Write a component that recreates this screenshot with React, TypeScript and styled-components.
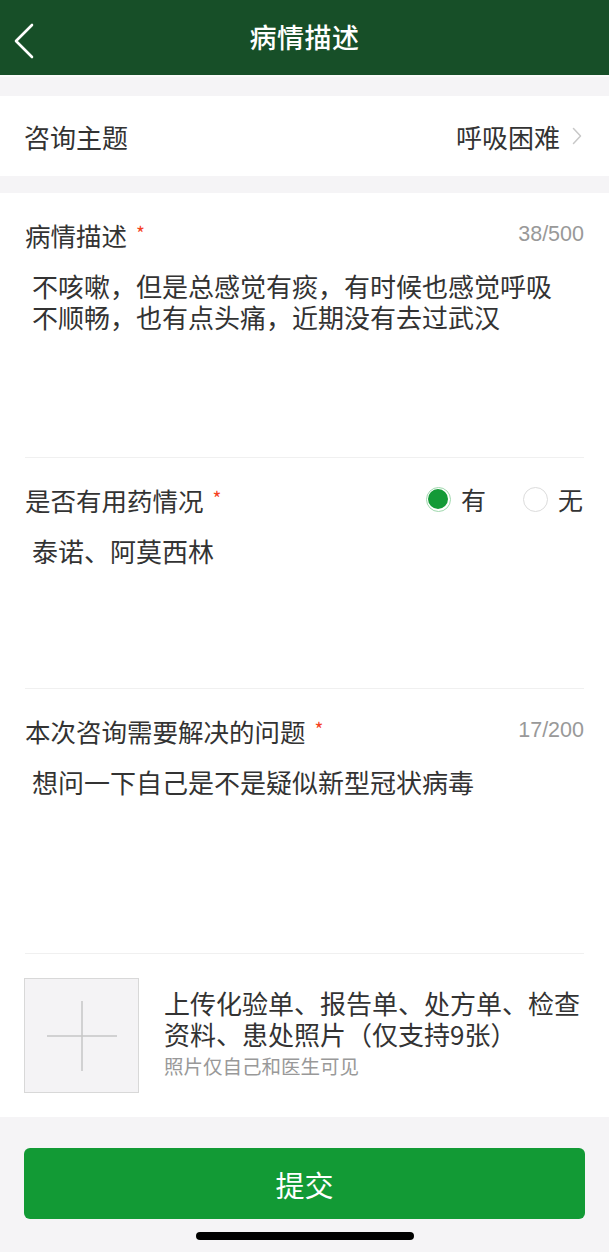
import React from 'react'
import styled, { createGlobalStyle } from 'styled-components'

const GlobalStyle = createGlobalStyle`
  html, body {
    margin: 0;
    padding: 0;
    background: #f5f4f6;
  }
  body {
    font-family: "Noto Sans CJK SC", "Noto Sans", sans-serif;
    color: #333;
  }
  * { box-sizing: border-box; }
`

const Screen = styled.div`
  width: 609px;
  height: 1252px;
  background: #f5f4f6;
  display: flex;
  flex-direction: column;
  overflow: hidden;
`

const NavBar = styled.div`
  height: 77px;
  flex-shrink: 0;
  background: #174f28;
  border-bottom: 2px solid #fbfbfb;
  display: flex;
  align-items: center;
  justify-content: center;
  position: relative;
`

const BackButton = styled.div`
  position: absolute;
  left: 12px;
  top: 22px;
  width: 24px;
  height: 38px;
  display: flex;
`

const NavTitle = styled.div`
  color: #fff;
  font-size: 27px;
  font-weight: 500;
  letter-spacing: 0.5px;
  margin-top: -3px;
`

const TopicRow = styled.div`
  margin-top: 19px;
  height: 80px;
  background: #fff;
  display: flex;
  align-items: center;
  justify-content: space-between;
  padding: 0 27px 0 24px;
  font-size: 26px;
`

const TopicValue = styled.div`
  display: flex;
  align-items: center;
  gap: 12px;
`

const Card = styled.div`
  margin-top: 17px;
  background: #fff;
  padding-bottom: 24px;
`

const Section = styled.div<{ $contentHeight: number }>`
  margin: 0 25px;
  border-bottom: 1px solid #f0f0f0;
  padding-top: 25px;
  min-height: ${p => 78 + p.$contentHeight}px;
`

const LabelRow = styled.div`
  height: 32px;
  display: flex;
  align-items: center;
  justify-content: space-between;
`

const Label = styled.div`
  font-size: 25.5px;
  color: #333;
  display: flex;
  align-items: center;
`

const Required = styled.span`
  color: #f5421f;
  font-size: 19px;
  margin-left: 9px;
  margin-top: -4px;
`

const Counter = styled.div`
  font-family: "Liberation Sans", Arial, sans-serif;
  font-size: 21.5px;
  color: #999;
`

const Content = styled.div`
  margin-top: 20px;
  padding: 0 20px 0 7px;
  font-size: 26px;
  line-height: 31px;
  color: #333;
`

const RadioGroup = styled.div`
  display: flex;
  align-items: center;
  gap: 37px;
  margin-right: 1px;
`

const RadioItem = styled.div`
  display: flex;
  align-items: center;
  gap: 10px;
  font-size: 25px;
`

const RadioCircle = styled.span<{ $checked?: boolean }>`
  width: 25px;
  height: 25px;
  border-radius: 50%;
  border: 1px solid ${p => (p.$checked ? '#9fd8ad' : '#dcdcdc')};
  display: flex;
  align-items: center;
  justify-content: center;
  &::after {
    content: '';
    width: 20px;
    height: 20px;
    border-radius: 50%;
    background: ${p => (p.$checked ? '#139a37' : 'transparent')};
  }
`

const UploadRow = styled.div`
  display: flex;
  align-items: flex-start;
  gap: 25px;
  padding: 24px 24px 0 24px;
`

const UploadBox = styled.div`
  width: 115px;
  height: 115px;
  flex-shrink: 0;
  background: #f4f3f5;
  border: 1px solid #d8d8d8;
  display: flex;
  align-items: center;
  justify-content: center;
`

const UploadText = styled.div`
  padding-top: 9px;
  display: flex;
  flex-direction: column;
`

const UploadTitle = styled.div`
  font-size: 26px;
  line-height: 31px;
  color: #333;
`

const UploadHint = styled.div`
  font-size: 19.5px;
  line-height: 28px;
  margin-top: 3px;
  color: #999;
`

const Footer = styled.div`
  padding: 31px 24px 0 24px;
  display: flex;
  flex-direction: column;
  align-items: center;
`

const SubmitButton = styled.button`
  width: 100%;
  height: 71px;
  border: none;
  border-radius: 6px;
  background: #129a35;
  color: #fff;
  font-family: "Noto Sans CJK SC", sans-serif;
  font-size: 29px;
  display: flex;
  align-items: center;
  justify-content: center;
`

const HomeIndicator = styled.div`
  margin-top: 13px;
  width: 218px;
  height: 8px;
  border-radius: 4px;
  background: #000;
`

const BackIcon = () => (
  <svg width="24" height="38" viewBox="0 0 24 38">
    <polyline points="20,3 4,19 20,35" fill="none" stroke="#fff" strokeWidth="2.6" strokeLinecap="round" strokeLinejoin="round" />
  </svg>
)

const ChevronRight = () => (
  <svg width="10" height="18" viewBox="0 0 10 18">
    <polyline points="1.5,1.5 8.5,9 1.5,16.5" fill="none" stroke="#c8c8c8" strokeWidth="1.5" strokeLinecap="round" strokeLinejoin="round" />
  </svg>
)

const PlusIcon = () => (
  <svg width="70" height="70" viewBox="0 0 70 70">
    <line x1="35" y1="0" x2="35" y2="70" stroke="#c6c6c6" strokeWidth="1.5" />
    <line x1="0" y1="35" x2="70" y2="35" stroke="#c6c6c6" strokeWidth="1.5" />
  </svg>
)

const App: React.FC = () => {
  return (
    <Screen>
      <GlobalStyle />
      <NavBar>
        <BackButton>
          <BackIcon />
        </BackButton>
        <NavTitle>病情描述</NavTitle>
      </NavBar>

      <TopicRow>
        <span>咨询主题</span>
        <TopicValue>
          <span>呼吸困难</span>
          <ChevronRight />
        </TopicValue>
      </TopicRow>

      <Card>
        <Section $contentHeight={187}>
          <LabelRow>
            <Label>病情描述<Required>*</Required></Label>
            <Counter>38/500</Counter>
          </LabelRow>
          <Content>不咳嗽，但是总感觉有痰，有时候也感觉呼吸不顺畅，也有点头痛，近期没有去过武汉</Content>
        </Section>

        <Section $contentHeight={153}>
          <LabelRow>
            <Label>是否有用药情况<Required>*</Required></Label>
            <RadioGroup>
              <RadioItem>
                <RadioCircle $checked />
                有
              </RadioItem>
              <RadioItem>
                <RadioCircle />
                无
              </RadioItem>
            </RadioGroup>
          </LabelRow>
          <Content>泰诺、阿莫西林</Content>
        </Section>

        <Section $contentHeight={187}>
          <LabelRow>
            <Label>本次咨询需要解决的问题<Required>*</Required></Label>
            <Counter>17/200</Counter>
          </LabelRow>
          <Content>想问一下自己是不是疑似新型冠状病毒</Content>
        </Section>

        <UploadRow>
          <UploadBox>
            <PlusIcon />
          </UploadBox>
          <UploadText>
            <UploadTitle>上传化验单、报告单、处方单、检查资料、患处照片（仅支持9张）</UploadTitle>
            <UploadHint>照片仅自己和医生可见</UploadHint>
          </UploadText>
        </UploadRow>
      </Card>

      <Footer>
        <SubmitButton>提交</SubmitButton>
        <HomeIndicator />
      </Footer>
    </Screen>
  )
}

export default App
